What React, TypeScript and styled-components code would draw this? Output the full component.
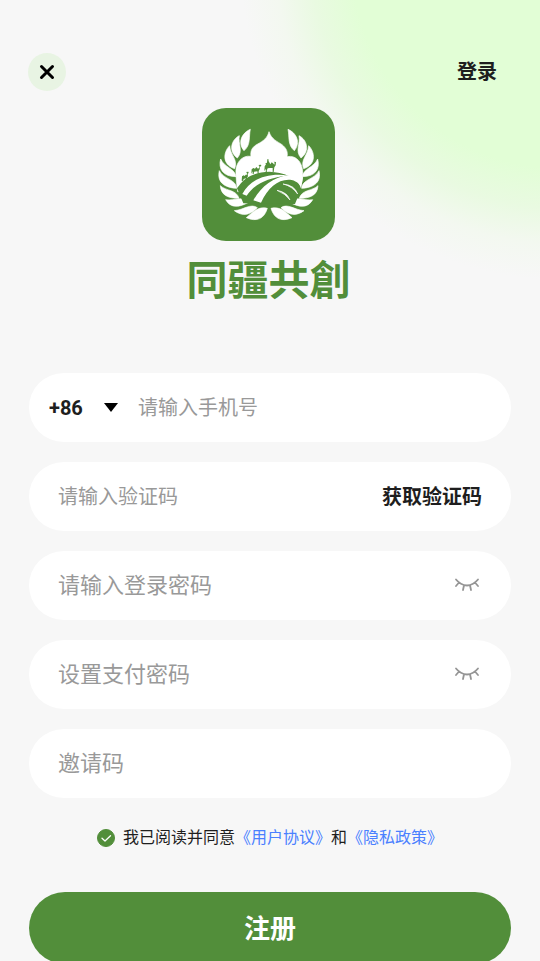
import React, { useState } from "react";
import styled, { createGlobalStyle } from "styled-components";

const GREEN = "#528e3a";

const GlobalStyle = createGlobalStyle`
  *, *::before, *::after { box-sizing: border-box; }
  body {
    margin: 0;
    background: #f7f7f7;
    color: #1e1e1e;
    font-family: Roboto, "Noto Sans CJK SC", sans-serif;
  }
  button, input, select { font: inherit; color: inherit; }
  button { border: 0; padding: 0; background: none; cursor: pointer; }
`;

const Page = styled.main`
  display: flex;
  flex-direction: column;
  min-height: 100vh;
  padding: 53px 29px 0;
  background: radial-gradient(
    circle at calc(100% + 20px) -40px,
    #e2fed6 0,
    #e2fed6 208px,
    #e9fae1 248px,
    #f3f8f0 284px,
    #f7f7f7 320px
  ) no-repeat;
`;

const TopBar = styled.header`
  display: flex;
  align-items: center;
  justify-content: space-between;
  height: 38px;
  padding-right: 14px;
`;

const CloseButton = styled.button`
  display: grid;
  place-items: center;
  width: 38px;
  height: 38px;
  margin-left: -1px;
  border-radius: 50%;
  background: #e8f4e3;
`;

const LoginLink = styled.a`
  color: inherit;
  font-size: 20px;
  font-weight: 700;
  line-height: 28px;
  text-decoration: none;
`;

const Brand = styled.div`
  display: flex;
  flex-direction: column;
  align-items: center;
  padding: 17px 3px 0 0;
`;

const Emblem = styled.svg`
  display: block;
  width: 133px;
  height: 133px;
`;

const BrandName = styled.h1`
  margin: 16px 0 0;
  color: ${GREEN};
  font-size: 41px;
  font-weight: 700;
  line-height: 48px;
`;

const Form = styled.form`
  display: flex;
  flex-direction: column;
  gap: 20px;
  margin-top: 68px;
`;

const Field = styled.div<{ $inset?: number }>`
  display: flex;
  align-items: center;
  height: 69px;
  padding: 0 29px 0 ${(p) => p.$inset ?? 29}px;
  border-radius: 35px;
  background: #fff;
`;

const TextInput = styled.input<{ $large?: boolean }>`
  flex: 1;
  min-width: 0;
  height: 40px;
  padding: 0;
  border: 0;
  outline: 0;
  background: transparent;
  font-size: ${(p) => (p.$large ? 22 : 20)}px;
  &::placeholder { color: #999; opacity: 1; }
`;

const CodePicker = styled.div`
  display: grid;
  grid-template-columns: 55px 34px;
  align-items: center;
`;

const CodeSelect = styled.select`
  grid-area: 1 / 1 / 2 / 3;
  height: 40px;
  padding: 0;
  border: 0;
  outline: 0;
  appearance: none;
  background: transparent;
  font-size: 20px;
  font-weight: 700;
`;

const Caret = styled.svg`
  grid-area: 1 / 2 / 2 / 3;
  justify-self: start;
  pointer-events: none;
`;

const SendCode = styled.button`
  font-size: 20px;
  font-weight: 700;
  line-height: 28px;
`;

const EyeButton = styled.button`
  display: grid;
  place-items: center;
  width: 30px;
  height: 30px;
`;

const Agreement = styled.div`
  display: flex;
  align-items: center;
  justify-content: center;
  gap: 8px;
  height: 40px;
  font-size: 16px;
  line-height: 24px;
`;

const Tick = styled.input`
  appearance: none;
  width: 18px;
  height: 18px;
  margin: 0;
  border: 1px solid ${GREEN};
  border-radius: 50%;
  cursor: pointer;
  &:checked {
    background: ${GREEN} url("data:image/svg+xml,%3Csvg xmlns='http://www.w3.org/2000/svg' viewBox='0 0 16 16' fill='none' stroke='white' stroke-width='1.3' stroke-linecap='round' stroke-linejoin='round'%3E%3Cpath d='M4 8.2l3 2.8 5.5-5.2'/%3E%3C/svg%3E") center / 16px no-repeat;
  }
`;

const PolicyLink = styled.a`
  color: #4a80ff;
  text-decoration: none;
`;

const Submit = styled.button`
  height: 72px;
  margin-top: 14px;
  padding-bottom: 4px;
  border-radius: 36px;
  background: ${GREEN};
  color: #fff;
  font-size: 26px;
  font-weight: 700;
`;

const leaves = [
  "M166 88C142 98 126 127 147 152C168 135 161 110 166 88Z",
  "M133 107C109 119 99 153 127 174C146 152 128 131 133 107Z",
  "M104 137C85 156 80 193 119 206C130 179 106 166 104 137Z",
  "M77 177C69 206 84 230 123 230C120 205 88 203 77 177Z",
  "M73 212C65 246 88 263 125 265C124 238 85 238 73 212Z",
  "M76 257C78 287 101 295 132 295C124 268 94 274 76 257Z",
  "M92 299C105 322 126 325 159 308C145 286 120 303 92 299Z",
  "M118 332C143 350 164 346 187 323C167 309 146 330 118 332Z",
  "M154 353C184 366 207 358 217 325C190 319 177 333 154 353Z",
];

function Laurel() {
  return (
    <>
      {leaves.map((d) => (
        <path key={d} d={d} />
      ))}
    </>
  );
}

function Logo() {
  return (
    <Emblem viewBox="21 24 399 399" role="img" aria-label="同疆共創">
      <rect x="21" y="24" width="399" height="399" rx="72" fill={GREEN} />
      <g fill="#fff" stroke="#fff" strokeWidth="2">
        <Laurel />
        <g transform="matrix(-1 0 0 1 445 0)">
          <Laurel />
        </g>
        <path d="M222 95C229 118 247 124 261 134C275 145 279 157 276 170C307 164 324 192 323 220Q323 245 316 264L300 275H128Q123 239 123 220C120 192 139 164 168 169C165 151 173 140 188 132C205 123 217 114 222 95Z" />
      </g>
      <path
        fill={GREEN}
        d="M126 265L133 256C149 231 185 215 223 215Q255 216 282 228C300 236 315 248 318 267L300 312L145 310Z"
      />
      <g fill="#fff">
        <path d="M278 226C215 218 165 238 142 282L155 287C178 253 215 235 278 226Z" />
        <path d="M278 226C235 232 198 260 175 301L198 308C220 261 252 235 290 240C307 244 316 255 318 263L324 232Q303 225 278 226Z" />
        <path d="M264 252Q299 255 308 282Q291 258 264 252Z" stroke="#fff" strokeWidth="2" />
        <path d="M246 271Q276 276 285 300Q271 281 246 271Z" stroke="#fff" strokeWidth="2" />
      </g>
      <g fill={GREEN}>
        <path d="M208 213L209 199L213 193L211 190L216 188L217 178L220 177L221 184L224 189L226 193L230 187L234 190L238 194L239 188L236 185L243 186L242 196L238 202L236 216L233 216L233 204L225 204L218 205L215 212L216 217L212 216L213 206Z" />
        <path d="M169 221L170 208L175 204L180 206L184 201L189 206L193 203L193 198L190 195L198 194L199 198L195 200L194 208L191 213L191 220L188 220L187 214L177 215L176 222L173 222L173 214Z" />
        <path d="M140 242L141 229L146 226L149 228L152 224L155 225L156 219L153 216L160 215L161 219L158 221L159 229L156 233L157 241L153 241L152 235L146 237L144 243Z" />
      </g>
    </Emblem>
  );
}

function ClosedEye() {
  return (
    <svg width="26" height="18" viewBox="0 0 26 18" fill="none" stroke="#959595" strokeWidth="1.8" strokeLinecap="round" strokeLinejoin="round" aria-hidden="true">
      <path d="M2 2.5Q6.5 8 13 8.5Q19.5 8 24 2.5M5 5.5L2 9M21 5.5L24 9M10 8.3L9 13M16 8.3L17 13" />
    </svg>
  );
}

function PasswordField({ label }: { label: string }) {
  const [visible, setVisible] = useState(false);
  return (
    <Field>
      <TextInput $large type={visible ? "text" : "password"} placeholder={label} aria-label={label} />
      <EyeButton type="button" aria-label="显示密码" onClick={() => setVisible(!visible)}>
        <ClosedEye />
      </EyeButton>
    </Field>
  );
}

export default function App() {
  const [agreed, setAgreed] = useState(true);
  return (
    <>
      <GlobalStyle />
      <Page>
        <TopBar>
          <CloseButton type="button" aria-label="关闭">
            <svg width="16" height="16" viewBox="0 0 16 16" stroke="#000" strokeWidth="3" strokeLinecap="round" aria-hidden="true">
              <path d="M2.5 2.5L13.5 13.5M13.5 2.5L2.5 13.5" />
            </svg>
          </CloseButton>
          <LoginLink href="#login">登录</LoginLink>
        </TopBar>
        <Brand>
          <Logo />
          <BrandName>同疆共創</BrandName>
        </Brand>
        <Form onSubmit={(e) => e.preventDefault()}>
          <Field $inset={20}>
            <CodePicker>
              <CodeSelect aria-label="国家代码" defaultValue="+86">
                <option>+86</option>
              </CodeSelect>
              <Caret width="14" height="10" viewBox="0 0 14 10" aria-hidden="true">
                <path d="M0 0H14L7 9Z" fill="#000" />
              </Caret>
            </CodePicker>
            <TextInput type="tel" placeholder="请输入手机号" aria-label="请输入手机号" />
          </Field>
          <Field>
            <TextInput placeholder="请输入验证码" aria-label="请输入验证码" />
            <SendCode type="button">获取验证码</SendCode>
          </Field>
          <PasswordField label="请输入登录密码" />
          <PasswordField label="设置支付密码" />
          <Field>
            <TextInput $large placeholder="邀请码" aria-label="邀请码" />
          </Field>
          <Agreement>
            <Tick id="agree" type="checkbox" checked={agreed} onChange={(e) => setAgreed(e.target.checked)} />
            <span>
              <label htmlFor="agree">我已阅读并同意</label>
              <PolicyLink href="#terms">《用户协议》</PolicyLink>和
              <PolicyLink href="#privacy">《隐私政策》</PolicyLink>
            </span>
          </Agreement>
          <Submit type="submit">注册</Submit>
        </Form>
      </Page>
    </>
  );
}
